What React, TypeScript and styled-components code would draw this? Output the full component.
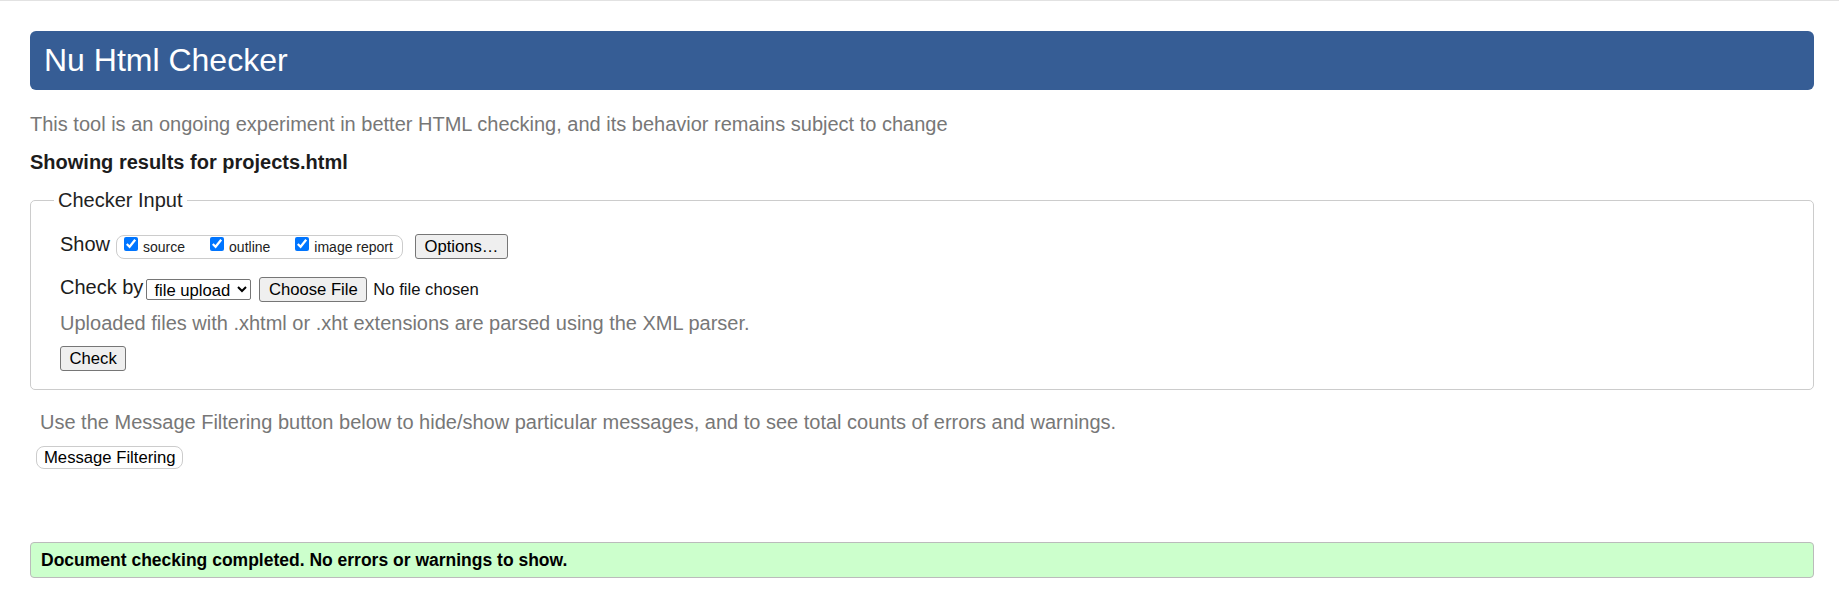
import React from 'react';
import styled, { createGlobalStyle } from 'styled-components';

const GlobalStyle = createGlobalStyle`
  html, body { margin: 0; background: #fff; }
  body {
    border-top: 1px solid #e2e2e2;
    padding: 0 25px 20px 30px;
    font-family: "Liberation Sans", Arial, sans-serif;
    color: #222;
  }
`;

const Page = styled.main`
  display: flex;
  flex-direction: column;
  padding-top: 30px;
`;

const Header = styled.h1`
  margin: 0;
  height: 59px;
  display: flex;
  align-items: center;
  padding: 0 14px;
  background: #365d95;
  border-radius: 6px;
  color: #fff;
  font-size: 32px;
  line-height: 1.15;
  font-weight: normal;
`;

const Text = styled.p<{ $mt: number; $ml?: number; $bold?: boolean; $muted?: boolean }>`
  margin: ${(p) => p.$mt}px 0 0 ${(p) => p.$ml ?? 0}px;
  font-size: 20px;
  line-height: 23px;
  font-weight: ${(p) => (p.$bold ? 'bold' : 'normal')};
  color: ${(p) => (p.$muted ? '#777' : '#1c1c1c')};
`;

const Fieldset = styled.fieldset`
  margin: 15px 0 0;
  padding: 21px 0 18px 29px;
  border: 1px solid #ccc;
  border-radius: 5px;
  min-width: 0;
`;

const Legend = styled.legend`
  margin-left: -6px;
  padding: 0 4px;
  font-size: 20px;
  line-height: 23px;
  color: #222;
`;

const FieldBody = styled.div`
  display: flex;
  flex-direction: column;
  align-items: flex-start;
`;

const Row = styled.div<{ $mt: number }>`
  display: flex;
  align-items: flex-start;
  margin-top: ${(p) => p.$mt}px;
`;

const FieldLabel = styled.span<{ $gap: number }>`
  font-size: 20px;
  line-height: 23px;
  margin-right: ${(p) => p.$gap}px;
  color: #1c1c1c;
`;

const CheckGroup = styled.span`
  display: inline-flex;
  align-items: flex-start;
  gap: 25px;
  box-sizing: border-box;
  height: 24px;
  margin-top: 1.5px;
  padding: 0 9px 0 7px;
  border: 1px solid #ccc;
  border-radius: 8px;
`;

const CheckItem = styled.label`
  display: flex;
  align-items: flex-start;
`;

const CheckBox = styled.input`
  width: 14px;
  height: 14px;
  margin: 1px 5px 0 0;
`;

const CheckText = styled.span`
  font-size: 14px;
  line-height: 16px;
  margin-top: 3px;
  color: #222;
`;

const Button = styled.button<{ $mt?: number; $ml?: number }>`
  margin: ${(p) => p.$mt ?? 0}px 0 0 ${(p) => p.$ml ?? 0}px;
  padding: 2px 8.5px;
  font-family: "Liberation Sans", Arial, sans-serif;
  font-size: 16.67px;
  line-height: 19px;
  color: #000;
  background: #efefef;
  border: 1px solid #767676;
  border-radius: 3px;
`;

const Select = styled.select`
  box-sizing: border-box;
  width: 105px;
  height: 21px;
  margin: 2.5px 8px 0 0;
  padding: 0 0 0 3px;
  font-family: "Liberation Sans", Arial, sans-serif;
  font-size: 16.67px;
  color: #000;
  background: #fff;
  border: 1px solid #767676;
  border-radius: 2px;
`;

const FileStatus = styled.span`
  margin: 4px 0 0 6px;
  font-size: 16.67px;
  line-height: 19px;
  color: #111;
`;

const FilterButton = styled.button`
  margin: 11.7px 0 0 6px;
  align-self: flex-start;
  padding: 1px 7px;
  font-family: "Liberation Sans", Arial, sans-serif;
  font-size: 16.67px;
  line-height: 19px;
  color: #000;
  background: #fff;
  border: 1px solid #ccc;
  border-radius: 8px;
`;

const Status = styled.div`
  margin-top: 73.6px;
  padding: 7px 10px;
  background: #ccffcc;
  border: 1px solid #bbb;
  border-radius: 4px;
  font-size: 17.5px;
  line-height: 20px;
  font-weight: bold;
  color: #000;
`;

const shows = ['source', 'outline', 'image report'];

export default function App() {
  return (
    <>
      <GlobalStyle />
      <Page>
        <Header>Nu Html Checker</Header>
        <Text $mt={23} $muted>
          This tool is an ongoing experiment in better HTML checking, and its behavior remains subject to change
        </Text>
        <Text $mt={15} $bold>
          Showing results for projects.html
        </Text>
        <Fieldset>
          <Legend>Checker Input</Legend>
          <FieldBody>
            <Row $mt={0}>
              <FieldLabel $gap={6}>Show</FieldLabel>
              <CheckGroup>
                {shows.map((s) => (
                  <CheckItem key={s}>
                    <CheckBox type="checkbox" defaultChecked />
                    <CheckText>{s}</CheckText>
                  </CheckItem>
                ))}
              </CheckGroup>
              <Button $mt={1} $ml={12}>Options…</Button>
            </Row>
            <Row $mt={17}>
              <FieldLabel $gap={3}>Check by</FieldLabel>
              <Select defaultValue="file">
                <option value="address">address</option>
                <option value="file">file upload</option>
                <option value="text">text input</option>
              </Select>
              <Button $mt={1}>Choose File</Button>
              <FileStatus>No file chosen</FileStatus>
            </Row>
            <Text $mt={10} $muted>
              Uploaded files with .xhtml or .xht extensions are parsed using the XML parser.
            </Text>
            <Button $mt={11}>Check</Button>
          </FieldBody>
        </Fieldset>
        <Text $mt={21} $ml={10} $muted>
          Use the Message Filtering button below to hide/show particular messages, and to see total counts of errors and warnings.
        </Text>
        <FilterButton>Message Filtering</FilterButton>
        <Status>Document checking completed. No errors or warnings to show.</Status>
      </Page>
    </>
  );
}
